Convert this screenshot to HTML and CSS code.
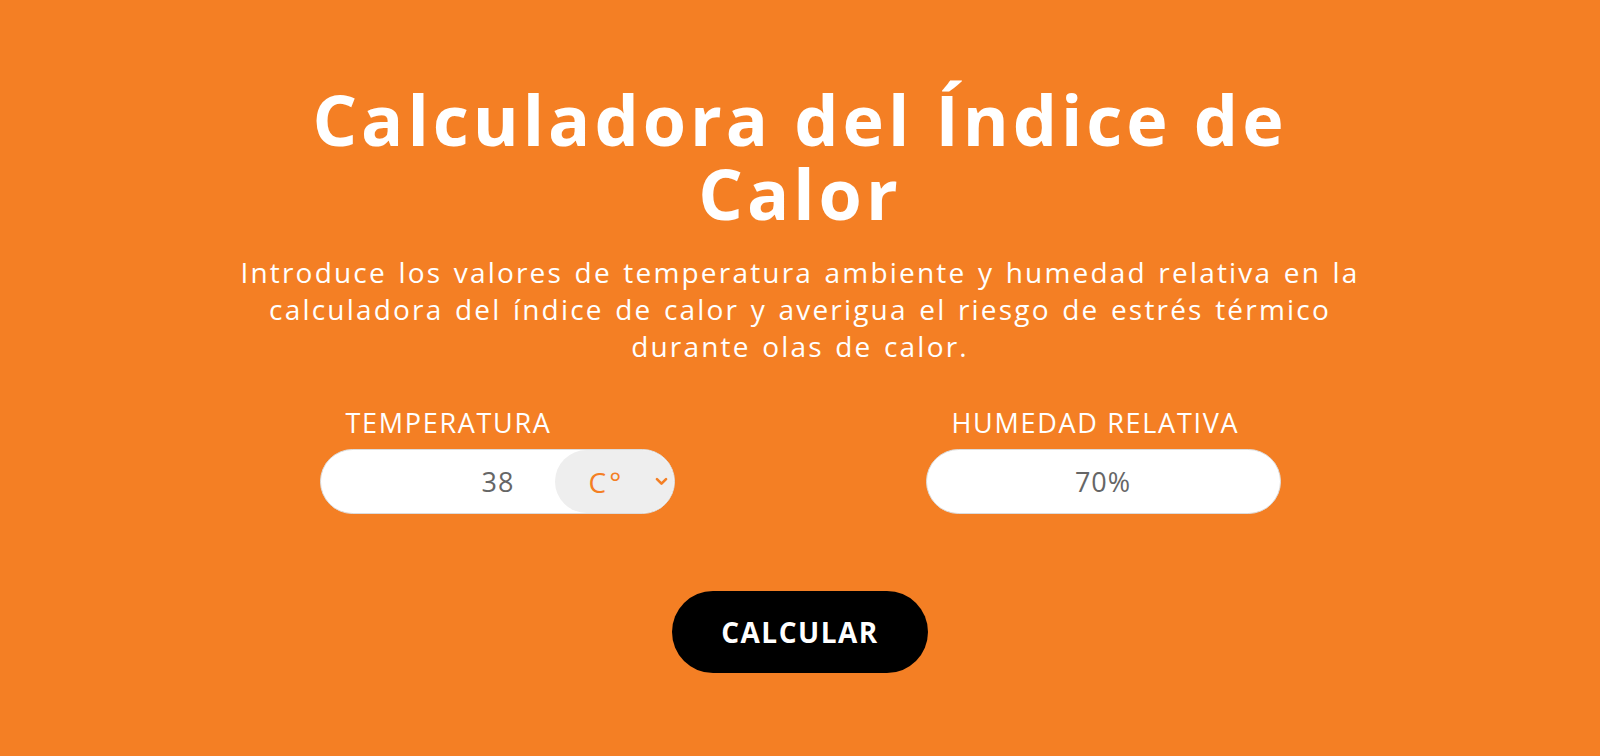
FILE: index.html
```html
<!DOCTYPE html>
<html lang="es">
<head>
<meta charset="utf-8">
<title>Calculadora del Índice de Calor</title>
<link rel="stylesheet" href="styles.css">
</head>
<body>
<main class="calc">
  <h1 class="calc-title">Calculadora del Índice de Calor</h1>
  <p class="calc-intro">Introduce los valores de temperatura ambiente y humedad relativa en la calculadora del índice de calor y averigua el riesgo de estrés térmico durante olas de calor.</p>

  <form class="calc-form" onsubmit="return false">
    <div class="calc-fields">
      <div class="field">
        <label class="field-label" for="temp">TEMPERATURA</label>
        <div class="pill pill-temp">
          <input class="pill-input pill-input-right" id="temp" type="text" value="38">
          <div class="unit">
            <span class="unit-text">C°</span>
            <svg class="unit-chevron" viewBox="0 0 12 8" width="12" height="8" aria-hidden="true">
              <path d="M1.8 1.8 L6 6 L10.2 1.8" fill="none" stroke="currentColor" stroke-width="2.4" stroke-linecap="round" stroke-linejoin="round"/>
            </svg>
          </div>
        </div>
      </div>
      <div class="field">
        <label class="field-label" for="hum">HUMEDAD RELATIVA</label>
        <div class="pill">
          <input class="pill-input pill-input-center" id="hum" type="text" value="70%">
        </div>
      </div>
    </div>
    <button class="calc-button" type="submit">CALCULAR</button>
  </form>
</main>
</body>
</html>
```

FILE: styles.css
```css
* {
  box-sizing: border-box;
}

html,
body {
  margin: 0;
  height: 100%;
}

body {
  background: #f47f24;
  color: #ffffff;
  font-family: "Open Sans", "Liberation Sans", sans-serif;
}

.calc {
  display: flex;
  flex-direction: column;
  align-items: center;
  padding-top: 82px;
}

.calc-title {
  margin: 0;
  max-width: 1080px;
  font-size: 70px;
  line-height: 74px;
  font-weight: 700;
  text-align: center;
  letter-spacing: 4px;
}

.calc-intro {
  margin: 24px 0 0;
  max-width: 1160px;
  font-size: 28px;
  line-height: 37px;
  font-weight: 400;
  text-align: center;
  letter-spacing: 2.2px;
  word-spacing: 2px;
}

.calc-form {
  display: flex;
  flex-direction: column;
  align-items: center;
  margin-top: 40px;
}

.calc-fields {
  display: grid;
  grid-template-columns: 606px 606px;
}

.field {
  width: 355px;
  justify-self: center;
  display: flex;
  flex-direction: column;
}

.field-label {
  padding-left: 26px;
  font-size: 27px;
  line-height: 36px;
  font-weight: 400;
  letter-spacing: 1.7px;
  margin-bottom: 8px;
}

.pill {
  display: flex;
  height: 65px;
  border-radius: 33px;
  background: #ffffff;
  border: 1px solid #dcdcdc;
  overflow: hidden;
}

.pill-input {
  flex: 1;
  min-width: 0;
  border: 0;
  outline: 0;
  background: transparent;
  font-family: inherit;
  font-size: 27px;
  letter-spacing: 1px;
  color: #666666;
}

.pill-input-right {
  text-align: right;
  padding-right: 40px;
}

.pill-input-center {
  text-align: center;
}

.unit {
  width: 119px;
  display: flex;
  align-items: center;
  justify-content: space-between;
  padding: 0 6px 0 34px;
  background: #eeeeee;
  border-radius: 33px;
  color: #f47f24;
}

.unit-text {
  font-size: 28px;
  letter-spacing: 3px;
}

.unit-chevron {
  width: 13px;
  height: 9px;
}

.calc-button {
  margin-top: 77px;
  width: 256px;
  height: 82px;
  border: 0;
  border-radius: 41px;
  background: #000000;
  color: #ffffff;
  font-family: inherit;
  font-size: 28px;
  font-weight: 700;
  letter-spacing: 1.5px;
  cursor: pointer;
}
```
